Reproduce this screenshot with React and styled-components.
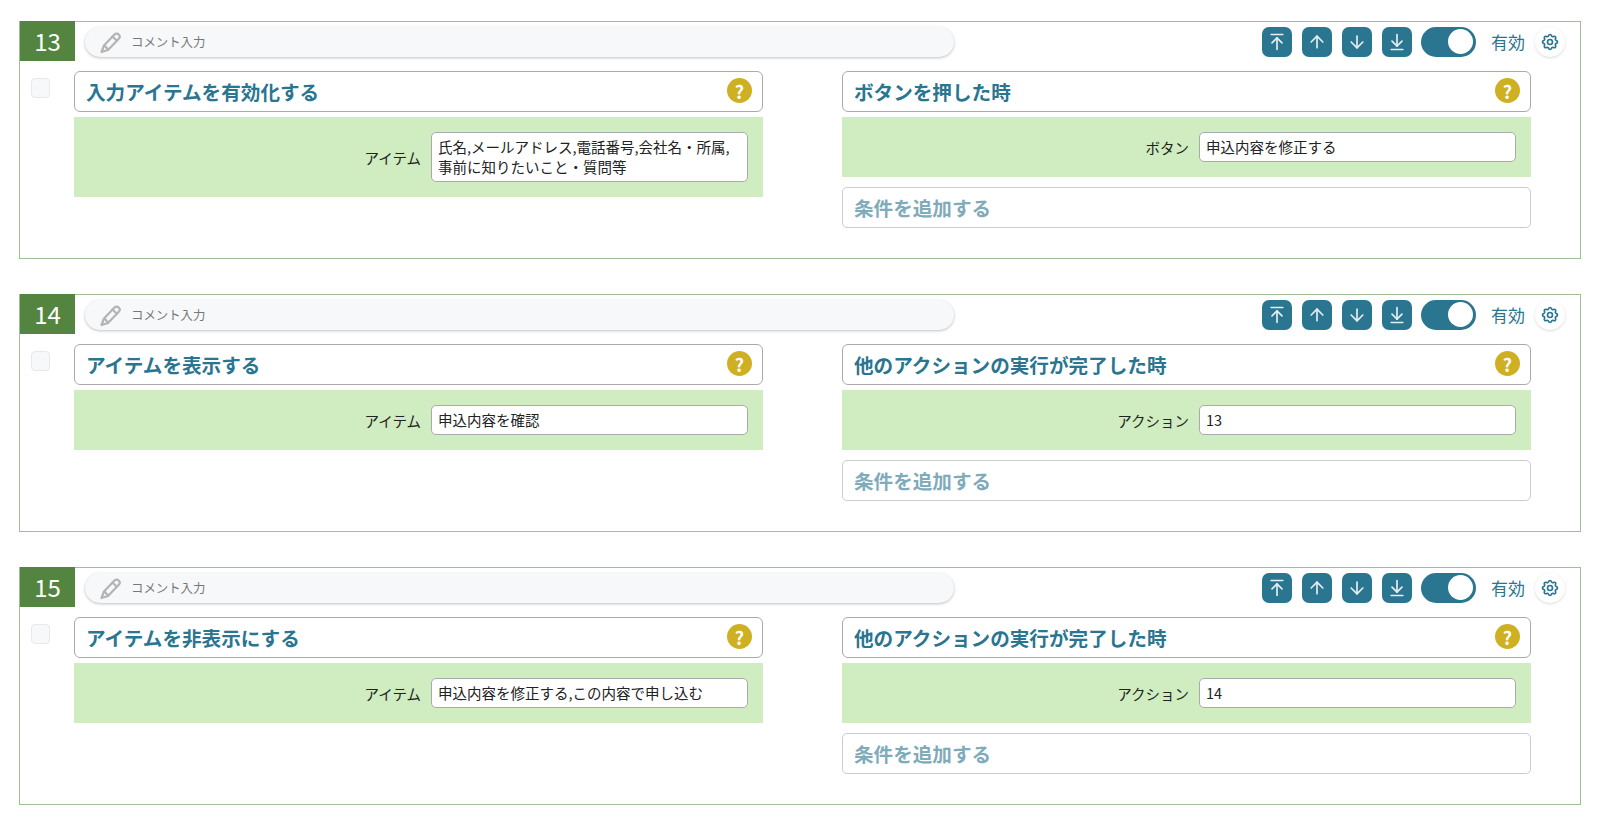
import React from "react";
import styled, { createGlobalStyle } from "styled-components";
import { ArrowUpToLine, ArrowUp, ArrowDown, ArrowDownToLine } from "lucide-react";
import { TbSettings } from "react-icons/tb";

const Global = createGlobalStyle`
  * { box-sizing: border-box; }
  body {
    margin: 0;
    background: #fff;
    font-family: "Noto Sans CJK JP", "Noto Sans", sans-serif;
  }
`;

const Page = styled.div`
  display: flex;
  flex-direction: column;
  gap: 35px;
  padding: 21px 19px 14px;
`;

const Card = styled.section`
  height: 238px;
  border: 1px solid #a3bd94;
`;

const Header = styled.header`
  display: flex;
  align-items: center;
  height: 39px;
  padding-right: 15px;
`;

const Badge = styled.div`
  align-self: flex-start;
  width: 55px;
  height: 40px;
  margin-top: -1px;
  background: #548540;
  color: #fff;
  font-size: 24px;
  line-height: 40px;
  text-align: center;
`;

const Comment = styled.div`
  display: flex;
  align-items: center;
  gap: 9px;
  width: 869px;
  height: 30px;
  margin-left: 10px;
  padding-left: 13px;
  background: #f7f8fa;
  border-radius: 15px;
  box-shadow: 0 1px 3px rgba(0, 0, 0, 0.25);
  color: #777;
  font-size: 12.4px;
`;

const Controls = styled.div`
  display: flex;
  align-items: center;
  margin-left: auto;
`;

const MoveButton = styled.button`
  display: flex;
  align-items: center;
  justify-content: center;
  width: 30px;
  height: 30px;
  margin-right: 10px;
  padding: 0;
  border: 0;
  border-radius: 7px;
  background: #2a7590;
  color: #e6eef1;
`;

const Toggle = styled.div`
  display: flex;
  align-items: center;
  justify-content: flex-end;
  width: 55px;
  height: 30px;
  margin-left: -1px;
  padding-right: 3px;
  border-radius: 15px;
  background: #2a7590;
`;

const Knob = styled.span`
  width: 25px;
  height: 25px;
  border-radius: 50%;
  background: #fff;
`;

const Status = styled.span`
  margin-left: 15px;
  color: #2a7590;
  font-size: 17px;
  line-height: 30px;
`;

const GearButton = styled.div`
  display: flex;
  align-items: center;
  justify-content: center;
  width: 30px;
  height: 30px;
  margin-left: 10px;
  border-radius: 50%;
  background: #fff;
  box-shadow: 0 1px 3px rgba(0, 0, 0, 0.15);
  color: #2a7590;
`;

const Body = styled.div`
  display: flex;
  align-items: flex-start;
  padding: 10px 0 0 11px;
`;

const Check = styled.div`
  flex: none;
  width: 19px;
  height: 20px;
  margin: 7px 24px 0 0;
  border: 1px solid #e6e8ec;
  border-radius: 4px;
  background: #f7f8fa;
`;

const Column = styled.div`
  flex: none;
  display: flex;
  flex-direction: column;
  width: 689px;
  margin-right: 79px;
`;

const Title = styled.div`
  display: flex;
  align-items: center;
  justify-content: space-between;
  height: 41px;
  padding: 0 10px 0 11px;
  border: 1px solid #aaa;
  border-radius: 6px;
  background: #fff;
  color: #2a7590;
  font-size: 19.6px;
  font-weight: 700;
`;

const Help = styled.span`
  display: flex;
  align-items: center;
  justify-content: center;
  width: 25px;
  height: 25px;
  margin-top: -2px;
  border-radius: 50%;
  background: #cfb022;
  color: #fff;
  font-size: 18px;
  font-weight: 700;
`;

const Params = styled.div`
  display: flex;
  align-items: center;
  justify-content: flex-end;
  gap: 10px;
  margin-top: 5px;
  padding: 15px;
  background: #cfedc1;
  color: #222;
  font-size: 14.5px;
`;

const Field = styled.div`
  width: 317px;
  min-height: 30px;
  padding: 4px 6px;
  border: 1px solid #aaa;
  border-radius: 5px;
  background: #fff;
  color: #222;
  font-size: 14.5px;
  line-height: 20px;
  white-space: nowrap;
`;

const AddCondition = styled.div`
  display: flex;
  align-items: center;
  height: 41px;
  margin-top: 10px;
  padding-left: 11px;
  border: 1px solid #ccc;
  border-radius: 5px;
  color: #7fabba;
  font-size: 19.6px;
  font-weight: 700;
`;

const PencilIcon = () => (
  <svg width="24" height="24" viewBox="0 0 24 24" fill="none" stroke="#b4b4b4" strokeWidth="2.2" strokeLinejoin="round" strokeLinecap="round">
    <path d="M6 15.5 16.5 4.5a3 3 0 0 1 4.3 4.2L10 20l-6.5 2Z" />
    <path d="M14.5 6.5l4.3 4.2M6.5 15.5l3.5 4" />
  </svg>
);

const rows = [
  {
    n: 13,
    left: "入力アイテムを有効化する",
    leftLabel: "アイテム",
    leftValue: (<>氏名,メールアドレス,電話番号,会社名・所属,<br />事前に知りたいこと・質問等</>),
    right: "ボタンを押した時",
    rightLabel: "ボタン",
    rightValue: "申込内容を修正する",
  },
  {
    n: 14,
    left: "アイテムを表示する",
    leftLabel: "アイテム",
    leftValue: "申込内容を確認",
    right: "他のアクションの実行が完了した時",
    rightLabel: "アクション",
    rightValue: "13",
  },
  {
    n: 15,
    left: "アイテムを非表示にする",
    leftLabel: "アイテム",
    leftValue: "申込内容を修正する,この内容で申し込む",
    right: "他のアクションの実行が完了した時",
    rightLabel: "アクション",
    rightValue: "14",
  },
];

export default function App() {
  return (
    <Page>
      <Global />
      {rows.map((r) => (
        <Card key={r.n}>
          <Header>
            <Badge>{r.n}</Badge>
            <Comment>
              <PencilIcon />
              コメント入力
            </Comment>
            <Controls>
              <MoveButton><ArrowUpToLine size={20} strokeWidth={2} /></MoveButton>
              <MoveButton><ArrowUp size={20} strokeWidth={2} /></MoveButton>
              <MoveButton><ArrowDown size={20} strokeWidth={2} /></MoveButton>
              <MoveButton><ArrowDownToLine size={20} strokeWidth={2} /></MoveButton>
              <Toggle><Knob /></Toggle>
              <Status>有効</Status>
              <GearButton><TbSettings size={20} /></GearButton>
            </Controls>
          </Header>
          <Body>
            <Check />
            <Column>
              <Title>{r.left}<Help>?</Help></Title>
              <Params>{r.leftLabel}<Field>{r.leftValue}</Field></Params>
            </Column>
            <Column>
              <Title>{r.right}<Help>?</Help></Title>
              <Params>{r.rightLabel}<Field>{r.rightValue}</Field></Params>
              <AddCondition>条件を追加する</AddCondition>
            </Column>
          </Body>
        </Card>
      ))}
    </Page>
  );
}
